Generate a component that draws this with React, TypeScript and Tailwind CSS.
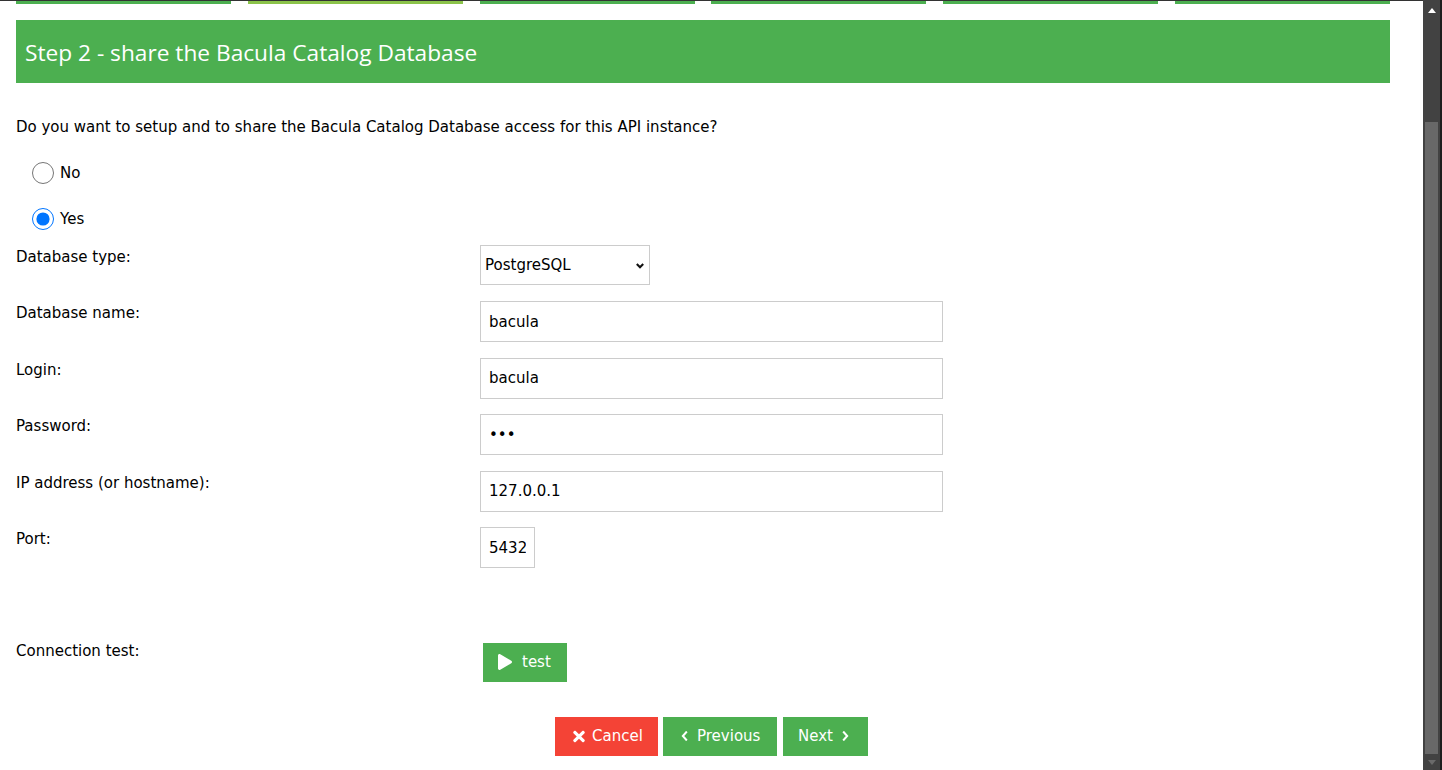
import React from "react";

const BODY_FONT = { fontFamily: "'DejaVu Sans', Verdana, sans-serif" };
const TITLE_FONT = { fontFamily: "'Open Sans', 'Noto Sans', sans-serif" };

const fields = [
  { label: "Database name:", value: "bacula", type: "text", w: "w-[463px]" },
  { label: "Login:", value: "bacula", type: "text", w: "w-[463px]" },
  { label: "Password:", value: "bac", type: "password", w: "w-[463px]" },
  { label: "IP address (or hostname):", value: "127.0.0.1", type: "text", w: "w-[463px]" },
  { label: "Port:", value: "5432", type: "text", w: "w-[55px]" },
];

function TimesIcon() {
  return (
    <svg viewBox="0 0 352 512" className="h-[17px] w-[12px]" fill="currentColor">
      <path d="M242.72 256l100.07-100.07c12.28-12.28 12.28-32.19 0-44.48l-22.24-22.24c-12.28-12.28-32.19-12.28-44.48 0L176 189.28 75.93 89.21c-12.28-12.28-32.19-12.28-44.48 0L9.21 111.450c-12.28 12.28-12.28 32.19 0 44.48L109.28 256 9.21 356.07c-12.28 12.28-12.28 32.19 0 44.48l22.24 22.24c12.28 12.28 32.2 12.28 44.48 0L176 322.72l100.07 100.07c12.28 12.28 32.2 12.28 44.48 0l22.24-22.24c12.28-12.28 12.28-32.19 0-44.48L242.72 256z" />
    </svg>
  );
}

function Chevron({ dir }: { dir: "left" | "right" }) {
  return (
    <svg viewBox="0 0 8 12" className="h-[10px] w-[7px]" fill="none" stroke="currentColor" strokeWidth="2.4" strokeLinecap="square">
      {dir === "left" ? <path d="M6 1.5 L2 6 L6 10.5" /> : <path d="M2 1.5 L6 6 L2 10.5" />}
    </svg>
  );
}

function PlayIcon() {
  return (
    <svg viewBox="0 0 448 512" className="h-[16px] w-[14px]" fill="currentColor">
      <path d="M424.4 214.7L72.4 6.6C43.8-10.3 0 6.1 0 47.9V464c0 37.5 40.7 60.1 72.4 41.3l352-208c31.4-18.5 31.5-64.1 0-82.6z" />
    </svg>
  );
}

export default function App() {
  return (
    <div className="flex h-[770px] w-full overflow-hidden bg-white text-black" style={BODY_FONT}>
      <div className="flex min-w-0 flex-1 flex-col border-t border-[#333]">
        <div className="pl-4 pr-[33px]">
          {/* wizard step bars */}
          <div className="grid grid-cols-6 gap-x-[16.8px]">
            <div className="h-[3px] bg-[#4caf50]" />
            <div className="h-[3px] bg-[#8bc34a]" />
            <div className="h-[3px] bg-[#4caf50]" />
            <div className="h-[3px] bg-[#4caf50]" />
            <div className="h-[3px] bg-[#4caf50]" />
            <div className="h-[3px] bg-[#4caf50]" />
          </div>

          <div className="mt-[16px] flex h-[63px] items-center bg-[#4caf50] pl-[9px] text-white">
            <h3 className="pt-[3px] text-[22.7px] leading-none" style={TITLE_FONT}>
              Step 2 - share the Bacula Catalog Database
            </h3>
          </div>

          <p className="mt-[34px] text-[15px] leading-[21px]">
            Do you want to setup and to share the Bacula Catalog Database access for this API instance?
          </p>

          <div className="mt-[12px] text-[15px]">
            <label className="flex h-[46px] items-center pl-[16px]">
              <input type="radio" name="share" className="m-0 h-[22px] w-[22px] accent-[#0075ff]" />
              <span className="ml-[6px] pt-[1px]">No</span>
            </label>
            <label className="flex h-[46px] items-center pl-[16px]">
              <input type="radio" name="share" defaultChecked className="m-0 h-[22px] w-[22px] accent-[#0075ff]" />
              <span className="ml-[6px] pt-[1px]">Yes</span>
            </label>
          </div>

          <div className="mt-[3px] text-[15px]">
            <div className="flex h-[56px]">
              <div className="w-[464px] pt-[2px] leading-[21px]">Database type:</div>
              <div className="relative h-[40px] w-[170px]">
                <select
                  defaultValue="pgsql"
                  className="h-full w-full appearance-none border border-[#ccc] bg-white pl-[4px] text-[15px] text-black outline-none"
                >
                  <option value="pgsql">PostgreSQL</option>
                  <option value="mysql">MySQL</option>
                </select>
                <svg viewBox="0 0 10 7" className="pointer-events-none absolute right-[6px] top-[18px] h-[6px] w-[8px]" fill="none" stroke="#111" strokeWidth="2.6">
                  <path d="M1 1 L5 5 L9 1" />
                </svg>
              </div>
            </div>

            {fields.map((f) => (
              <div key={f.label} className="flex h-[56.5px]">
                <div className="w-[464px] pt-[2px] leading-[21px]">{f.label}</div>
                <input
                  type={f.type}
                  defaultValue={f.value}
                  className={`h-[41px] ${f.w} border border-[#ccc] bg-white px-[8px] text-[15px] text-black outline-none`}
                />
              </div>
            ))}

            <div className="mt-[56px] flex">
              <div className="w-[467px] pt-[1px] leading-[21px]">Connection test:</div>
              <button className="mt-[3px] flex h-[39px] w-[84px] items-center bg-[#4caf50] pl-[15px] text-[15px] text-white">
                <PlayIcon />
                <span className="ml-[10px]">test</span>
              </button>
            </div>
          </div>
        </div>

        <div className="mt-[35px] flex justify-center gap-[5px] text-[15px] text-white">
          <button className="flex h-[39px] w-[103px] items-center bg-[#f44336] pl-[18px]">
            <TimesIcon />
            <span className="ml-[7px]">Cancel</span>
          </button>
          <button className="flex h-[39px] w-[114px] items-center bg-[#4caf50] pl-[18px]">
            <Chevron dir="left" />
            <span className="ml-[9px]">Previous</span>
          </button>
          <button className="ml-[1px] flex h-[39px] w-[85px] items-center bg-[#4caf50] pl-[15px]">
            <span>Next</span>
            <span className="ml-[9px]">
              <Chevron dir="right" />
            </span>
          </button>
        </div>
      </div>

      {/* scrollbar */}
      <div className="flex w-[19px] shrink-0">
        <div className="flex w-[17px] flex-col items-center bg-[#424242]">
          <svg viewBox="0 0 8 5" className="mt-[8px] h-[5px] w-[8px]" fill="#fff">
            <path d="M0 5 L4 0 L8 5 Z" />
          </svg>
          <div className="mt-[109px] h-[632px] w-[13px] bg-[#686868]" />
          <svg viewBox="0 0 8 5" className="mt-[6px] h-[5px] w-[8px]" fill="#6a6a6a">
            <path d="M0 0 L4 5 L8 0 Z" />
          </svg>
        </div>
        <div className="w-[2px] bg-[#1e1e1e]" />
      </div>
    </div>
  );
}
